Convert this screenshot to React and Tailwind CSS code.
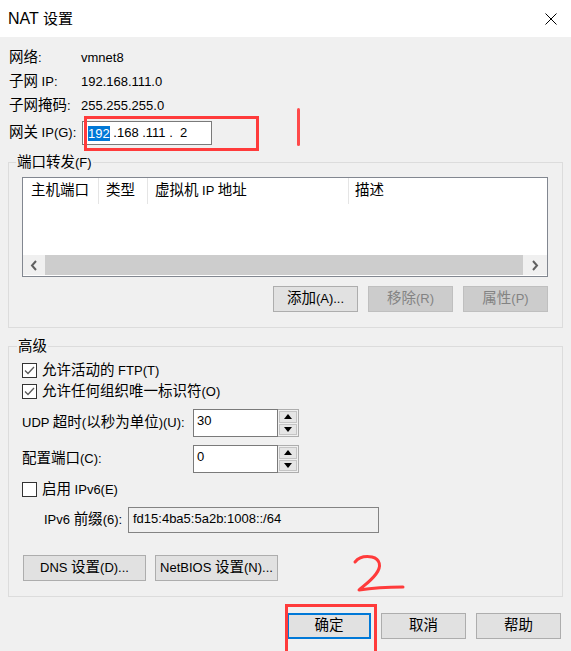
const CJK = /([\u2E80-\u9FFF\uFF00-\uFFEF]+)/

// Latin text stays at 13px, CJK runs get the slightly larger dialog size
function T({ children, big = 'text-[14.5px]' }) {
  return (
    <span className="whitespace-pre">
      {String(children)
        .split(CJK)
        .map((s, i) => (i % 2 ? <span key={i} className={big}>{s}</span> : s))}
    </span>
  )
}

function Button({ children, className = '', disabled, primary }) {
  return (
    <div
      className={`h-[26px] flex items-center justify-center ${
        primary
          ? 'border-2 border-[#0078d7] bg-[#e1e1e1] text-black'
          : disabled
          ? 'border border-[#bfbfbf] bg-[#cccccc] text-[#838383]'
          : 'border border-[#adadad] bg-[#e1e1e1] text-black'
      } ${className}`}
    >
      <T>{children}</T>
    </div>
  )
}

function Checkbox({ checked, label }) {
  return (
    <div className="h-[21px] flex items-center gap-[5px]">
      <svg width="15" height="15" viewBox="0 0 15 15" className="flex-shrink-0">
        <rect x="0.5" y="0.5" width="14" height="14" fill="#fff" stroke="#333" />
        {checked && <polyline points="3,7.5 6,10.5 12,4" fill="none" stroke="#5a5a5a" strokeWidth="1.3" />}
      </svg>
      <T>{label}</T>
    </div>
  )
}

function Spin({ value }) {
  return (
    <div className="flex h-[28px] w-[106px]">
      <div className="w-[85px] border border-[#7a7a7a] bg-white flex items-center pl-[3px] pb-[4px]">{value}</div>
      <div className="flex-1 border border-l-0 border-[#adadad] bg-[#f0f0f0] flex flex-col gap-[1px] p-[1px]">
        <div className="flex-1 bg-[#e5e5e5] border border-[#c4c4c4] flex items-center justify-center">
          <svg width="8" height="5" viewBox="0 0 8 5"><polygon points="0,5 8,5 4,0" fill="#000" /></svg>
        </div>
        <div className="flex-1 bg-[#e5e5e5] border border-[#c4c4c4] flex items-center justify-center">
          <svg width="8" height="5" viewBox="0 0 8 5"><polygon points="0,0 8,0 4,5" fill="#000" /></svg>
        </div>
      </div>
    </div>
  )
}

function Chevron({ dir }) {
  return (
    <svg width="8" height="11" viewBox="0 0 8 11">
      <polyline
        points={dir === 'left' ? '6,1 2,5.5 6,10' : '2,1 6,5.5 2,10'}
        fill="none"
        stroke="#606060"
        strokeWidth="2"
      />
    </svg>
  )
}

export default function App() {
  const info = [
    ['网络:', 'vmnet8', 'h-[22px]'],
    ['子网 IP:', '192.168.111.0', 'h-[25px]'],
    ['子网掩码:', '255.255.255.0', 'h-[24px]'],
  ]
  const cols = [
    ['主机端口', 'w-[76px] pl-[8px]'],
    ['类型', 'w-[49px] pl-[7px]'],
    ['虚拟机 IP 地址', 'w-[201px] pl-[7px]'],
  ]

  return (
    <div
      className="relative w-[571px] h-[651px] overflow-hidden bg-[#f0f0f0] text-[13px] text-black"
      style={{ fontFamily: '"Liberation Sans", "Noto Sans CJK SC", sans-serif' }}
    >
      {/* Title bar */}
      <div className="h-[37px] bg-white flex items-center justify-between pl-2 pr-[14px]">
        <span className="text-[16px]"><T big="text-[15px]">NAT 设置</T></span>
        <svg width="12" height="12" viewBox="0 0 12 12">
          <path d="M0.5 0.5 L11.5 11.5 M11.5 0.5 L0.5 11.5" stroke="#000" strokeWidth="1" />
        </svg>
      </div>

      <div className="px-2">
        {/* Network info */}
        <div className="mt-[10px]">
          {info.map(([label, value, h]) => (
            <div key={label} className={`${h} flex items-center`}>
              <span className="w-[72px] ml-[1px]"><T>{label}</T></span>
              <span>{value}</span>
            </div>
          ))}
          <div className="mt-[3px] h-[24px] flex items-center">
            <span className="w-[73px] ml-[1px]"><T>网关 IP(G):</T></span>
            <div className="w-[130px] h-[24px] border border-[#7a7a7a] bg-white flex items-center pl-[5px] whitespace-pre">
              <span className="bg-[#0078d7] text-white leading-[15px]">192</span>
              <span> .168 .111 .  2</span>
            </div>
          </div>
        </div>

        {/* Port forwarding */}
        <fieldset className="mt-[8px] border border-[#dcdcdc] p-0 m-0 min-w-0">
          <legend className="ml-[7px] px-[1px] h-[18px] leading-[18px]"><T>端口转发(F)</T></legend>
          <div className="pl-[13px] pr-[14px] pt-[6px] pb-[15px]">
            <div className="h-[100px] border border-[#828790] bg-white flex flex-col">
              <div className="h-[26px] flex">
                {cols.map(([c, w]) => (
                  <div key={c} className={`${w} border-r border-[#e5e5e5] flex items-center`}>
                    <T>{c}</T>
                  </div>
                ))}
                <div className="flex-1 pl-[6px] flex items-center"><T>描述</T></div>
              </div>
              <div className="flex-1" />
              <div className="h-[20px] mb-[1px] flex bg-[#f0f0f0]">
                <div className="w-[22px] flex items-center justify-center"><Chevron dir="left" /></div>
                <div className="flex-1 bg-[#cdcdcd]" />
                <div className="w-[24px] flex items-center justify-center"><Chevron dir="right" /></div>
              </div>
            </div>
            <div className="mt-[9px] flex justify-end gap-[10px]">
              <Button className="w-[85px]">添加(A)...</Button>
              <Button className="w-[85px]" disabled>移除(R)</Button>
              <Button className="w-[85px]" disabled>属性(P)</Button>
            </div>
          </div>
        </fieldset>

        {/* Advanced */}
        <fieldset className="mt-[9px] border border-[#dcdcdc] p-0 m-0 min-w-0">
          <legend className="ml-[8px] px-[1px] h-[18px] leading-[18px]"><T>高级</T></legend>
          <div className="pl-[13px] pr-[14px] pt-[5px] pb-[15px]">
            <Checkbox checked label="允许活动的 FTP(T)" />
            <Checkbox checked label="允许任何组织唯一标识符(O)" />
            <div className="mt-[7px] flex items-center">
              <span className="w-[171px]"><T>UDP 超时(以秒为单位)(U):</T></span>
              <Spin value="30" />
            </div>
            <div className="mt-[8px] flex items-center">
              <span className="w-[171px]"><T>配置端口(C):</T></span>
              <Spin value="0" />
            </div>
            <div className="mt-[6px]">
              <Checkbox label="启用 IPv6(E)" />
            </div>
            <div className="mt-[7px] flex items-center pl-[22px]">
              <span className="w-[84px]"><T>IPv6 前缀(6):</T></span>
              <div className="w-[251px] h-[26px] border border-[#838383] bg-[#f0f0f0] flex items-center pl-[4px] pb-[3px]">
                fd15:4ba5:5a2b:1008::/64
              </div>
            </div>
            <div className="mt-[22px] flex gap-[9px] pl-[1px]">
              <Button className="w-[123px]">DNS 设置(D)...</Button>
              <Button className="w-[123px]">NetBIOS 设置(N)...</Button>
            </div>
          </div>
        </fieldset>

        {/* Dialog buttons */}
        <div className="mt-[16px] flex justify-end gap-[10px] pr-[2px]">
          <Button className="w-[84px]" primary>确定</Button>
          <Button className="w-[85px]">取消</Button>
          <Button className="w-[85px]">帮助</Button>
        </div>
      </div>

      {/* Red hand annotations drawn over the dialog */}
      <div className="absolute left-[84px] top-[116px] w-[175px] h-[35px] border-[3px] border-[#ff3b3b]" />
      <div className="absolute left-[297px] top-[108px] w-[3px] h-[38px] rounded-full bg-[#ff4a4a]" />
      <svg className="absolute left-[350px] top-[552px]" width="58" height="44" viewBox="0 0 58 44">
        <path
          d="M5 10 C9 5 16 4 22 5 C30 7 32 14 26 22 C20 30 12 35 9 38 C22 36 40 35 53 35"
          fill="none"
          stroke="#ff3b3b"
          strokeWidth="3"
          strokeLinecap="round"
          strokeLinejoin="round"
        />
      </svg>
      <div className="absolute left-[285px] top-[604px] w-[92px] h-[52px] border-[3px] border-[#ff3b3b]" />
    </div>
  )
}
